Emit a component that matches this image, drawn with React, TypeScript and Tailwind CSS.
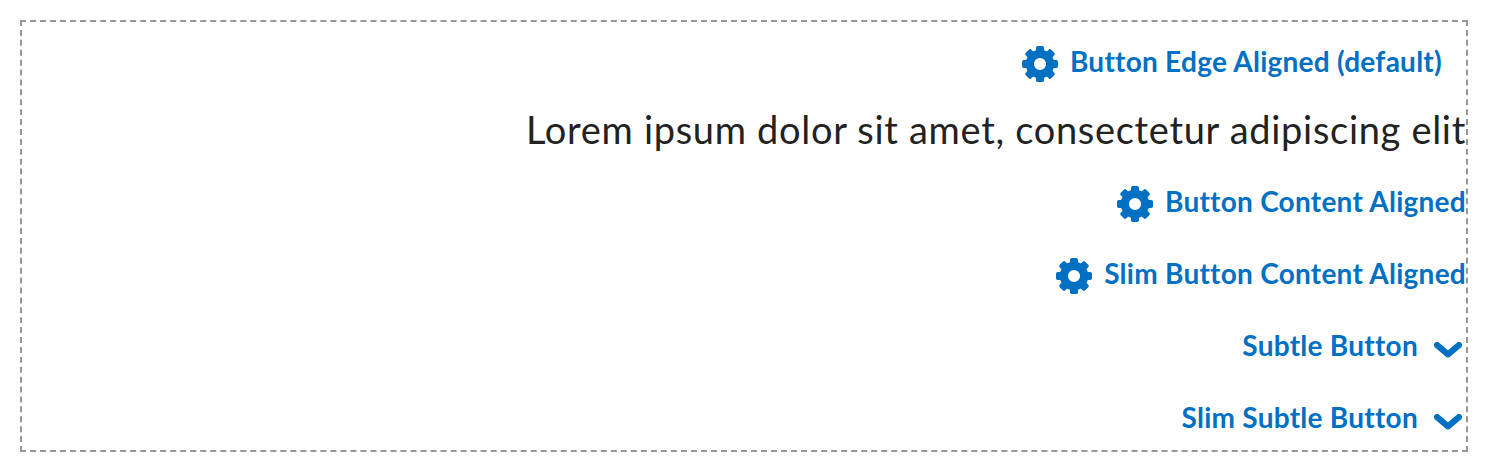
import type { ReactNode } from 'react';

function Gear() {
  return (
    <svg width="36" height="36" viewBox="0 0 36 36" className="shrink-0 fill-[#0070c2]">
      <circle cx="18" cy="18" r="10.200" strokeWidth="8.200" className="fill-none stroke-[#0070c2]" />
      {[0, 45, 90, 135, 180, 225, 270, 315].map((angle) => (
        <rect key={angle} x="14" y="0" width="8" height="9" rx="1.800" transform={`rotate(${angle} 18 18)`} />
      ))}
    </svg>
  );
}

function Chevron() {
  return (
    <svg width="28" height="16" viewBox="0 0 28 16" className="mt-1 shrink-0 fill-none stroke-[#0070c2]">
      <path d="M3.100 3.100L14 12.400L24.900 3.100" strokeWidth="6.200" strokeLinecap="round" strokeLinejoin="round" />
    </svg>
  );
}

function Button({ children, className = '' }: { children: ReactNode; className?: string }) {
  return (
    <button className={`flex h-[72px] shrink-0 items-center text-[28px] leading-9 font-bold tracking-[0.26px] text-[#0070c2] ${className}`}>
      {children}
    </button>
  );
}

export default function App() {
  return (
    <div className="h-[472px] overflow-hidden bg-white p-5 font-['Lato',sans-serif]">
      <main className="flex h-[432px] flex-col items-end border-2 border-dashed border-[#979797] pt-[6px]">
        <Button className="gap-3 pr-6"><Gear /><span className="mb-1.5">Button Edge Aligned (default)</span></Button>
        <p className="h-[68px] shrink-0 text-[38px] leading-[58px] tracking-[0.69px] whitespace-nowrap text-[#222222]">Lorem ipsum dolor sit amet, consectetur adipiscing elit</p>
        <Button className="gap-3"><Gear /><span className="mb-1.5">Button Content Aligned</span></Button>
        <Button className="gap-3"><Gear /><span className="mb-1.5">Slim Button Content Aligned</span></Button>
        <Button className="gap-4 pr-1"><span className="mb-1.5">Subtle Button</span><Chevron /></Button>
        <Button className="gap-4 pr-1"><span className="mb-1.5">Slim Subtle Button</span><Chevron /></Button>
      </main>
    </div>
  );
}
